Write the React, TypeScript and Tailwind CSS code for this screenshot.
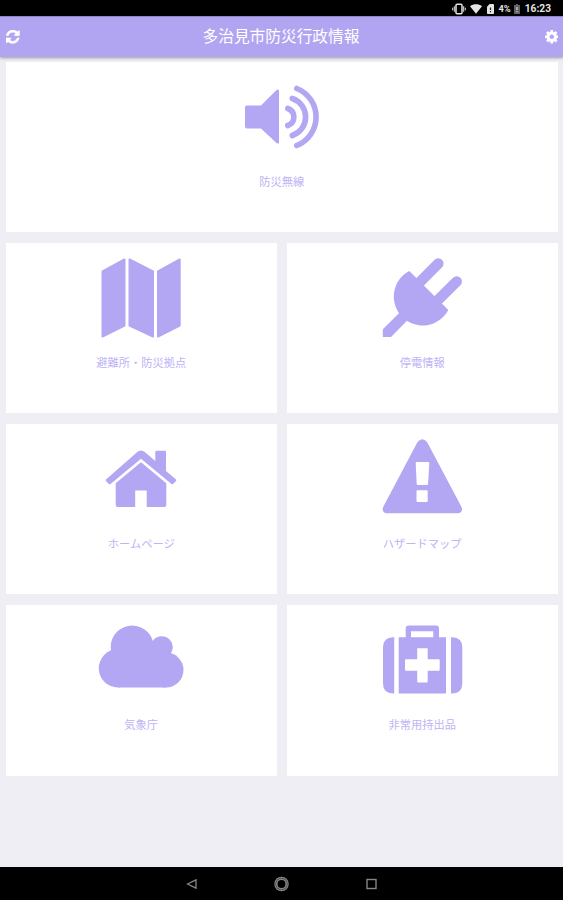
import React from 'react';

interface TileProps {
  label: string;
  wide?: boolean;
  children: React.ReactNode;
}

const Tile: React.FC<TileProps> = ({ label, wide, children }) => (
  <button
    className={`flex h-[170.3px] flex-col items-center bg-white text-[#b3a6f3] ${
      wide ? 'col-span-2' : ''
    }`}
  >
    <svg viewBox="0 0 100 100" className="h-[100px] w-[100px] shrink-0" fill="currentColor">
      {children}
    </svg>
    <span className="mt-[11px] text-[11.25px] leading-[17px] text-[#beb3f5]">{label}</span>
  </button>
);

const StatusBar: React.FC = () => (
  <div className="flex h-[16px] shrink-0 items-center justify-end bg-black pr-[12px] text-[#e4e4e4]">
    <svg viewBox="0 0 14 12" className="mt-[2px] h-[12px] w-[14px]" fill="none" stroke="currentColor">
      <rect x="4" y="1.2" width="6" height="9.6" rx="1" strokeWidth="1.5" />
      <path d="M2.3 3.2v5.6M11.7 3.2v5.6M.7 4.7v2.6M13.3 4.7v2.6" strokeWidth="1" />
    </svg>
    <svg viewBox="0 0 12 10" className="mt-[1px] ml-[4px] h-[10px] w-[12px]" fill="currentColor">
      <path d="M0 2.2C3.5-.4 8.5-.4 12 2.2L6 9.8z" />
    </svg>
    <svg viewBox="0 0 7 10" className="mt-[2px] ml-[5px] h-[10px] w-[7px]" fill="currentColor">
      <path d="M2.6 0H6.2Q7 0 7 .8V9.2Q7 10 6.2 10H.8Q0 10 0 9.2V2.8z" />
      <path d="M3.5 3.5v2.5M3.5 7v1.3" stroke="#222" strokeWidth="1.2" />
    </svg>
    <span className="mt-[2px] ml-[5px] font-[Roboto,sans-serif] text-[9.3px] leading-none font-bold">4%</span>
    <svg viewBox="0 0 6 10" className="mt-[1px] ml-[3px] h-[10px] w-[6px]">
      <path d="M2 0h2v1h2v9H0V1h2z" fill="#626262" />
      <path d="M3 3v3M3 7v1.3" stroke="#d0d0d0" strokeWidth="1.2" />
    </svg>
    <span className="mt-[2px] ml-[5px] font-[Roboto,sans-serif] text-[10.2px] leading-none font-bold">16:23</span>
  </div>
);

const Header: React.FC = () => (
  <header className="z-10 flex h-[41px] shrink-0 items-center justify-between border-t border-[#8f84c4] bg-[#b1a5f2] pr-[5px] pl-[6px] text-white shadow-[0_1px_3px_rgba(0,0,0,0.35)]">
    <svg viewBox="0 0 1536 1536" className="h-[13.5px] w-[13.5px]" fill="currentColor" stroke="currentColor" strokeWidth="50">
      <path d="M1511 928q0 5-1 7-64 268-268 434.500T764 1536q-146 0-282.500-55T238 1324l-129 129q-19 19-45 19t-45-19-19-45V960q0-26 19-45t45-19h448q26 0 45 19t19 45-19 45l-137 137q71 66 161 102t187 36q134 0 250-65t186-179q11-17 53-117 8-23 30-23h192q13 0 22.500 9.500t9.500 22.500zm25-800v448q0 26-19 45t-45 19h-448q-26 0-45-19t-19-45 19-45l138-138Q969 256 768 256q-134 0-250 65T332 500q-11 17-53 117-8 23-30 23H50q-13 0-22.500-9.500T18 608v-7q65-268 270-434.500T768 0q146 0 284 55.500T1297 212l130-129q19-19 45-19t45 19 19 45z" />
    </svg>
    <h1 className="mr-[2px] mb-[3px] text-[15.7px] leading-[24px]">多治見市防災行政情報</h1>
    <svg viewBox="0 0 1536 1536" className="h-[13.5px] w-[13.5px]" fill="currentColor">
      <path d="M1024 768q0-106-75-181t-181-75-181 75-75 181 75 181 181 75 181-75 75-181zm512-109v222q0 12-8 23t-20 13l-185 28q-19 54-39 91 35 50 107 138 10 12 10 25t-9 23q-27 37-99 108t-94 71q-12 0-26-9l-138-108q-44 23-91 38-16 136-29 186-7 28-36 28H657q-14 0-24.500-8.500T621 1506l-28-184q-49-16-90-37l-141 107q-10 9-25 9-14 0-25-11-126-114-165-168-7-10-7-23 0-12 8-23 15-21 51-66.500t54-70.500q-27-50-41-99L29 913q-13-2-21-12.500T0 877V655q0-12 8-23t19-13l186-28q14-46 39-92-40-57-107-138-10-12-10-24 0-10 9-23 26-36 98.500-107.500T337 135q13 0 26 10l138 107q44-23 91-38 16-136 29-186 7-28 36-28h222q14 0 24.500 8.500T915 30l28 184q49 16 90 37l142-107q9-9 24-9 13 0 25 10 129 119 165 170 7 8 7 22 0 12-8 23-15 21-51 66.500t-54 70.500q26 50 41 98l183 28q13 2 21 12.500t8 23.500z" />
    </svg>
  </header>
);

const NavBar: React.FC = () => (
  <nav className="flex h-[33px] shrink-0 items-center justify-center gap-[75px] bg-black text-[#858585]">
    <svg viewBox="0 0 14 14" className="h-[14px] w-[14px]" fill="none" stroke="currentColor" strokeWidth="1.3">
      <path d="M2.5 7L11 2.8V11.2z" />
    </svg>
    <svg viewBox="0 0 16 16" className="h-[16px] w-[16px]" fill="none" stroke="currentColor">
      <circle cx="7.5" cy="8" r="6.6" strokeWidth="1.3" />
      <circle cx="7.5" cy="8" r="4.8" strokeWidth="1.7" />
    </svg>
    <svg viewBox="0 0 14 14" className="h-[14px] w-[14px]" fill="none" stroke="currentColor" strokeWidth="1.4">
      <rect x="2" y="2.500" width="9" height="9" />
    </svg>
  </nav>
);

const App: React.FC = () => {
  return (
    <div className="flex h-[900px] w-[563px] flex-col overflow-hidden bg-[#eeeef4] font-['Noto_Sans_CJK_JP',sans-serif]">
      <StatusBar />
      <Header />

      <main className="grid flex-1 grid-cols-2 content-start gap-x-[10.5px] gap-y-[10.8px] pt-[5px] pr-[5.5px] pl-[6px]">
        <Tile label="防災無線" wide>
          <path d="M15 43.5H29L44.5 28Q47 26.5 47 29V80Q47 82.5 44.5 81L29 66.5H15Q13 66.5 13 64.5V45.5Q13 43.5 15 43.5z" />
          <g fill="none" stroke="currentColor" strokeWidth="5.6" strokeLinecap="round">
            <path d="M55.8 46.5A9 9 0 0 1 55.8 63.5" />
            <path d="M60.3 36.5A19.5 19.5 0 0 1 60.3 73.5" />
            <path d="M64.8 26.5A30.7 30.7 0 0 1 64.8 83.5" />
          </g>
        </Tile>

        <Tile label="避難所・防災拠点">
          <g stroke="currentColor" strokeWidth="2" strokeLinejoin="round">
            <path d="M11.5 28.5L33.5 16.5V82.5L11.5 93.5z" />
            <path d="M38.5 16.5L62 28.5V93.5L38.5 82.5z" />
            <path d="M67 28.5L88.7 16.5V82.5L67 93.5z" />
          </g>
        </Tile>

        <Tile label="停電情報">
          <path d="M37.3 28L76.3 67A28.9 28.9 0 1 1 37.3 28z" />
          <path
            d="M66.3 20.500L47 40M84.7 38.5L65 58"
            stroke="currentColor"
            strokeWidth="10.5"
            strokeLinecap="round"
          />
          <path d="M27.7 69.5L35.5 77.3L19 94H10.8V86.3z" />
        </Tile>

        <Tile label="ホームページ">
          <path d="M64.3 40V27.7Q64.3 26.7 65.3 26.7H74Q75 26.7 75 27.7V47L85 55.4Q85.7 56.2 85 57L82.2 60Q81.3 60.5 80.5 60L50 34.8L19.5 60Q18.7 60.5 17.8 60L15 57Q14.3 56.2 15 55.4L46.3 28Q50 25 53.7 28L64.3 37z" />
          <path d="M50 38.3L75.3 59.3V81Q75.3 83 73.3 83H55.7V66.5H44.2V83H26.7Q24.7 83 24.7 81V59.3z" />
        </Tile>

        <Tile label="ハザードマップ">
          <path
            fillRule="evenodd"
            d="M45.4 18.2Q50.3 12.5 55.2 18.2L89 82Q92 87.5 86.5 89.3H14.2Q8.7 87.5 11.7 82zM44.700 38Q43.6 38 43.7 39.2L44.7 60Q44.8 61 45.8 61H55Q56 61 56.1 60L57.3 39.2Q57.4 38 56.3 38zM45.3 66.3Q44.5 66.3 44.5 67.3V77Q44.5 78 45.5 78H54.7Q55.7 78 55.7 77V67.3Q55.7 66.3 54.7 66.3z"
          />
        </Tile>

        <Tile label="気象庁">
          <circle cx="41.2" cy="42" r="21.5" />
          <circle cx="70.7" cy="42.2" r="11" />
          <circle cx="27" cy="63.3" r="19.2" />
          <circle cx="75" cy="65" r="17.5" />
          <path d="M27 45H75V82.5H27z" />
        </Tile>

        <Tile label="非常用持出品">
          <path d="M21 32.2H22.2V88.5H21Q11 88 11 78.5V42.2Q11 32.7 21 32.2z" />
          <path d="M80.3 32.2H79V88.5H80.3Q90.3 88 90.3 78.5V42.2Q90.3 32.7 80.3 32.2z" />
          <path
            fillRule="evenodd"
            d="M26.7 32.2H33.7V23.5Q33.7 20.5 36.7 20.5H64Q67 20.5 67 23.5V32.2H74V88.5H26.7zM39 26.2V32.2H61.3V26.2zM45.2 43.2V54.2H34Q33 54.2 33 55.2V64.8Q33 65.8 34 65.8H45.2V76.5Q45.2 77.5 46.2 77.5H54.7Q55.7 77.5 55.7 76.5V65.8H66.7Q67.7 65.8 67.7 64.8V55.2Q67.7 54.2 66.7 54.2H55.7V43.2z"
          />
        </Tile>
      </main>

      <NavBar />
    </div>
  );
};

export default App;
